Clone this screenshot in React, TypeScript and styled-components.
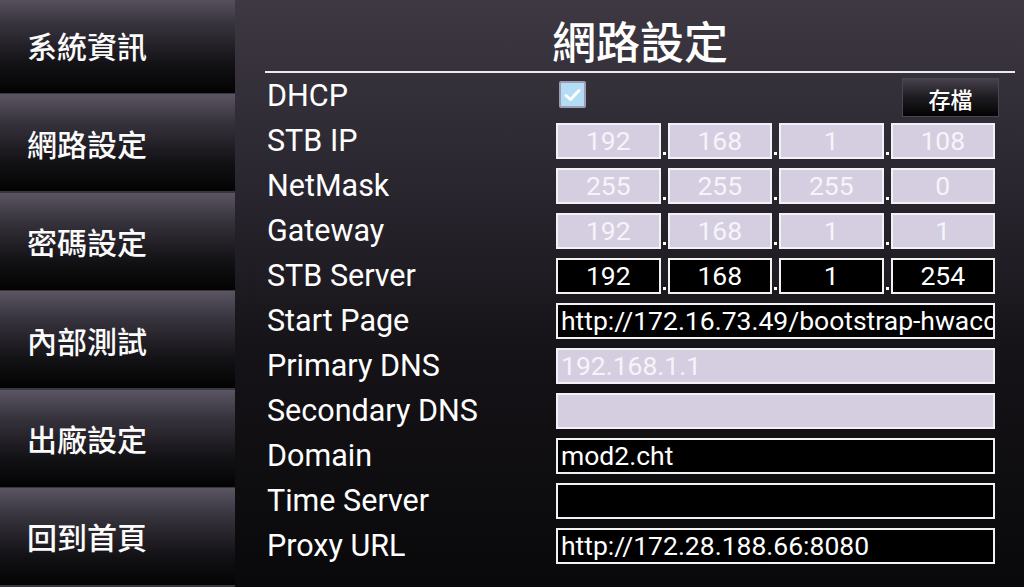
import React from "react";
import styled, { createGlobalStyle } from "styled-components";

const GlobalStyle = createGlobalStyle`
  html, body {
    margin: 0;
    padding: 0;
    background: #000;
    width: 1024px;
    height: 587px;
    overflow: hidden;
  }
  * { box-sizing: border-box; }
`;

const Screen = styled.div`
  display: flex;
  width: 1024px;
  height: 587px;
  overflow: hidden;
  font-family: Roboto, "Noto Sans CJK TC", sans-serif;
  color: #fff;
`;

const Sidebar = styled.nav`
  width: 235px;
  flex-shrink: 0;
  display: flex;
  flex-direction: column;
  gap: 1.4px;
  margin-top: -4px;
  background: #3a3640;
`;

const NavButton = styled.div`
  height: 97px;
  flex-shrink: 0;
  display: flex;
  align-items: center;
  padding-left: 27px;
  background: linear-gradient(to bottom, #5a5561 0%, #36323c 30%, #111013 72%, #030303 100%);
  font-family: "Noto Sans CJK TC", sans-serif;
  font-size: 30px;
  font-weight: 500;
  color: #fbfbfb;
`;

const Main = styled.main`
  flex: 1;
  display: flex;
  flex-direction: column;
  padding: 0 9px 0 30px;
  background: linear-gradient(to bottom, #3d3841 0%, #2b2731 30%, #151317 60%, #09080a 100%);
`;

const TitleBar = styled.div`
  height: 71px;
  display: flex;
  justify-content: center;
  align-items: flex-end;
`;

const Title = styled.h1`
  margin: 0;
  font-family: "Noto Sans CJK TC", sans-serif;
  font-size: 44px;
  line-height: 62px;
  font-weight: 500;
  color: #fff;
`;

const Divider = styled.div`
  height: 2px;
  background: #ececec;
`;

const Form = styled.div`
  display: grid;
  grid-template-columns: 291px 1fr;
  grid-auto-rows: 45px;
  align-items: center;
`;

const Label = styled.div`
  padding-left: 2px;
  font-family: Roboto, sans-serif;
  font-size: 30.5px;
  color: #fff;
  white-space: nowrap;
`;

const FieldCell = styled.div`
  display: flex;
  align-items: center;
  width: 440px;
`;

const ControlRow = styled(FieldCell)`
  justify-content: space-between;
  width: 441px;
`;

const Box = styled.div<{ $enabled?: boolean; $center?: boolean }>`
  height: 36px;
  border: 2px solid ${(p) => (p.$enabled ? "#f2f2f2" : "#f3f1f6")};
  background: ${(p) => (p.$enabled ? "#000" : "#d5cee0")};
  color: ${(p) => (p.$enabled ? "#fff" : "#f6f4fa")};
  font-family: Roboto, sans-serif;
  font-size: 26.5px;
  line-height: 32px;
  display: flex;
  align-items: center;
  justify-content: ${(p) => (p.$center ? "center" : "flex-start")};
  padding: 0 3px;
  white-space: nowrap;
  overflow: hidden;
`;

const WideBox = styled(Box)`
  width: 439px;
`;

const IpBox = styled(Box)`
  width: 104.5px;
  flex-shrink: 0;
`;

const IpDot = styled.div`
  width: 7px;
  height: 36px;
  flex-shrink: 0;
  display: flex;
  justify-content: center;
  align-items: flex-end;
  padding-bottom: 4px;
  &::after {
    content: "";
    width: 3px;
    height: 3px;
    background: #fff;
  }
`;

const CheckBox = styled.div`
  width: 27px;
  height: 27px;
  margin-left: 3px;
  margin-top: -2px;
  border: 2px solid #9f9cb6;
  border-radius: 2px;
  background: #b2ddf4;
  display: flex;
  align-items: center;
  justify-content: center;
`;

const SaveButton = styled.div`
  width: 97px;
  height: 39px;
  margin-top: 4px;
  margin-right: -2px;
  border: 1px solid #4a4650;
  background: linear-gradient(to bottom, #46414c 0%, #1d1b20 50%, #030303 100%);
  display: flex;
  align-items: center;
  justify-content: center;
  font-family: "Noto Sans CJK TC", sans-serif;
  font-size: 22px;
  font-weight: 500;
  color: #fff;
`;

const navItems = ["系統資訊", "網路設定", "密碼設定", "內部測試", "出廠設定", "回到首頁"];

type IpRow = { label: string; parts: string[]; enabled: boolean };

const ipRows: IpRow[] = [
  { label: "STB IP", parts: ["192", "168", "1", "108"], enabled: false },
  { label: "NetMask", parts: ["255", "255", "255", "0"], enabled: false },
  { label: "Gateway", parts: ["192", "168", "1", "1"], enabled: false },
  { label: "STB Server", parts: ["192", "168", "1", "254"], enabled: true },
];

type TextRow = { label: string; value: string; enabled: boolean };

const textRows: TextRow[] = [
  { label: "Start Page", value: "http://172.16.73.49/bootstrap-hwacceleration", enabled: true },
  { label: "Primary DNS", value: "192.168.1.1", enabled: false },
  { label: "Secondary DNS", value: "", enabled: false },
  { label: "Domain", value: "mod2.cht", enabled: true },
  { label: "Time Server", value: "", enabled: true },
  { label: "Proxy URL", value: "http://172.28.188.66:8080", enabled: true },
];

export default function App() {
  return (
    <>
      <GlobalStyle />
      <Screen>
        <Sidebar>
          {navItems.map((item) => (
            <NavButton key={item}>{item}</NavButton>
          ))}
        </Sidebar>
        <Main>
          <TitleBar>
            <Title>網路設定</Title>
          </TitleBar>
          <Divider />
          <Form>
            <Label>DHCP</Label>
            <ControlRow>
              <CheckBox>
                <svg width="19" height="16" viewBox="0 0 19 16">
                  <path d="M3 8.5 L7.5 12.5 L16 3.5" fill="none" stroke="#fff" strokeWidth="3" strokeLinecap="round" strokeLinejoin="round" />
                </svg>
              </CheckBox>
              <SaveButton>存檔</SaveButton>
            </ControlRow>
            {ipRows.map((row) => (
              <React.Fragment key={row.label}>
                <Label>{row.label}</Label>
                <FieldCell>
                  {row.parts.map((part, i) => (
                    <React.Fragment key={i}>
                      {i > 0 && <IpDot />}
                      <IpBox $enabled={row.enabled} $center>
                        {part}
                      </IpBox>
                    </React.Fragment>
                  ))}
                </FieldCell>
              </React.Fragment>
            ))}
            {textRows.map((row) => (
              <React.Fragment key={row.label}>
                <Label>{row.label}</Label>
                <FieldCell>
                  <WideBox $enabled={row.enabled}>{row.value}</WideBox>
                </FieldCell>
              </React.Fragment>
            ))}
          </Form>
        </Main>
      </Screen>
    </>
  );
}
